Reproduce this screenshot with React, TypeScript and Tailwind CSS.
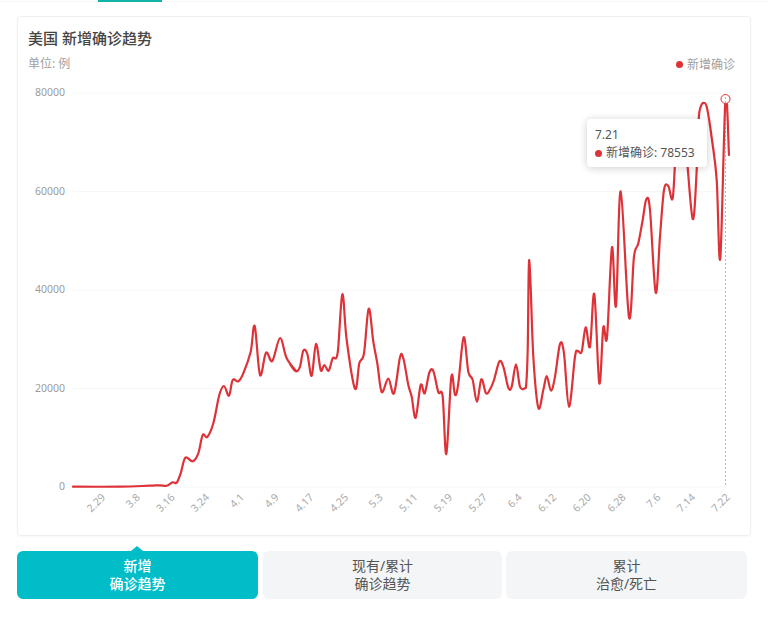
const font = '"Noto Sans", "Noto Sans CJK SC", sans-serif';

const raw5: number[][] = [[39,620],[180,620],[270,617],[300,616],[320,617],[338,607],[350,608],[362,580],[376,533],[398,544],[415,520],[428,465],[442,471],[460,430],[478,345],[492,318],[507,347],[518,300],[535,304],[550,280],[572,215],[584,138],[600,285],[618,218],[637,243],[660,174],[680,235],[708,273]];
const raw6: number[][] = [[0,342],[18,364],[30,350],[40,302],[52,312],[65,377],[78,282],[92,360],[103,345],[116,362],[128,325],[143,308],[157,133],[170,270],[195,416],[208,340],[222,310],[236,176],[250,275],[262,340],[275,426],[295,386],[312,430],[330,322],[340,325],[355,405],[365,440],[377,503],[392,405],[404,430],[418,368],[430,363],[445,426],[458,440],[469,612],[484,380],[495,435],[505,400],[521,262],[535,365],[548,390],[561,456],[574,388],[588,430],[600,418],[612,390],[628,335],[640,350],[655,413],[665,410],[678,343],[690,410],[704,415],[709,400],[713,300]];
const raw7: number[][] = [[88,270],[100,560],[115,713],[130,660],[140,618],[153,662],[165,620],[180,522],[192,550],[207,710],[225,560],[233,543],[245,545],[257,472],[270,530],[283,372],[298,640],[310,472],[321,502],[336,232],[348,408],[362,64],[387,442],[402,260],[415,220],[428,150],[439,88],[450,120],[467,368],[480,200],[492,60],[505,48],[518,85]];

const points: number[][] = [
  ...raw5.map(([x, y]) => [60 + x / 3, 280 + y / 3]),
  ...raw6.map(([x, y]) => [290 + x / 3, 250 + y / 3]),
  ...raw7.map(([x, y]) => [500 + x / 3, 170 + y / 3]),
  [676, 150], [681, 128], [686, 150], [692.7, 219], [696.7, 170], [698.7, 119], [701, 106], [704, 103], [707, 108], [712, 140], [716.7, 180], [720.3, 258], [725.5, 99], [729, 155],
];

function smooth(p: number[][]): string {
  let d = `M${p[0][0].toFixed(1)} ${p[0][1].toFixed(1)}`;
  for (let i = 0; i < p.length - 1; i++) {
    const a = p[Math.max(0, i - 1)];
    const b = p[i];
    const c = p[i + 1];
    const e = p[Math.min(p.length - 1, i + 2)];
    const t = 0.17;
    d += `C${(b[0] + (c[0] - a[0]) * t).toFixed(1)} ${(b[1] + (c[1] - a[1]) * t).toFixed(1)} ${(c[0] - (e[0] - b[0]) * t).toFixed(1)} ${(c[1] - (e[1] - b[1]) * t).toFixed(1)} ${c[0].toFixed(1)} ${c[1].toFixed(1)}`;
  }
  return d;
}

const ticks = ["2.29","3.8","3.16","3.24","4.1","4.9","4.17","4.25","5.3","5.11","5.19","5.27","6.4","6.12","6.20","6.28","7.6","7.14","7.22"];
const yTicks: [string, number][] = [["80000", 93], ["60000", 191.5], ["40000", 290], ["20000", 388.5], ["0", 487]];

function Chart() {
  return (
    <svg className="absolute left-[-18px] top-[-17px]" width="768" height="535" viewBox="0 0 768 535" style={{ fontFamily: font }}>
      {yTicks.map(([label, y]) => (
        <g key={label}>
          <line x1="73" x2="726" y1={y} y2={y} stroke="#f7f7f7" strokeWidth="1" />
          <text x="65" y={y + 3} textAnchor="end" fontSize="10.5" fill="#9c9c9c">{label}</text>
        </g>
      ))}
      {ticks.map((t, i) => {
        const x = 106 + i * 34.7;
        return (
          <text key={t} x={x} y={498} textAnchor="end" fontSize="10.5" fill="#aaaaaa" transform={`rotate(-45 ${x} 498)`}>{t}</text>
        );
      })}
      <line x1="725.5" x2="725.5" y1="99" y2="487" stroke="#b5b5b5" strokeWidth="1" strokeDasharray="2 2" />
      <path d={smooth(points)} fill="none" stroke="#dd3338" strokeWidth="2.2" strokeLinejoin="round" strokeLinecap="round" />
      <circle cx="725.5" cy="99" r="4.5" fill="#ffffff" stroke="#dd3338" strokeWidth="1" />
      <line x1="725.5" x2="725.5" y1="97" y2="103" stroke="#b5b5b5" strokeWidth="1" strokeDasharray="2 2" />
    </svg>
  );
}

export default function App() {
  return (
    <div className="w-[768px] h-[619px] bg-white overflow-hidden text-[#444444]" style={{ fontFamily: font }}>
      <div className="h-[16px]">
        <div className="h-[2px] border-b border-[#f7f7f7]">
          <div className="ml-[98px] w-[64px] h-[2px] bg-[#11b3a8]" />
        </div>
      </div>
      <div className="relative ml-[17px] w-[734px] h-[520px] rounded border border-[#efefef] shadow-[0_1px_2px_rgba(0,0,0,0.03)]">
        <Chart />
        <div className="relative px-[10px] pt-[11px]">
          <div className="text-[15px] leading-[20px] font-medium text-[#444444]">美国 新增确诊趋势</div>
          <div className="flex justify-between items-center mt-[5px] text-[12px] leading-[20px] text-[#a0a0a0]">
            <span>单位: 例</span>
            <span className="flex items-center gap-[4px] mr-[5px] mt-[2px]">
              <span className="w-[7px] h-[7px] rounded-full bg-[#dd3338] mt-[-2px]" />
              新增确诊
            </span>
          </div>
        </div>
        <div className="absolute left-[569px] top-[102px] w-[120px] h-[48px] rounded bg-white shadow-[0_1px_8px_rgba(0,0,0,0.2)] px-[8px] pt-[7px] text-[12px] leading-[18px] text-[#555555]">
          <div>7.21</div>
          <div className="flex items-center gap-[4px]">
            <span className="w-[7px] h-[7px] rounded-full bg-[#dd3338]" />
            <span>新增确诊: 78553</span>
          </div>
        </div>
      </div>
      <div className="flex ml-[17px] mt-[15px] text-[14px] leading-[18px] text-center">
        <div className="relative w-[241px] h-[48px] rounded-md bg-[#00bdc8] text-white font-medium pt-[6px]">
          <div className="absolute left-[114px] top-[-5px] w-0 h-0 border-x-[6px] border-x-transparent border-b-[5px] border-b-[#00bdc8]" />
          <div>新增</div>
          <div>确诊趋势</div>
        </div>
        <div className="ml-[5px] w-[239px] h-[48px] rounded-md bg-[#f4f5f7] text-[#555555] pt-[6px]">
          <div>现有/累计</div>
          <div>确诊趋势</div>
        </div>
        <div className="ml-[4px] w-[241px] h-[48px] rounded-md bg-[#f4f5f7] text-[#555555] pt-[6px]">
          <div>累计</div>
          <div>治愈/死亡</div>
        </div>
      </div>
    </div>
  );
}
